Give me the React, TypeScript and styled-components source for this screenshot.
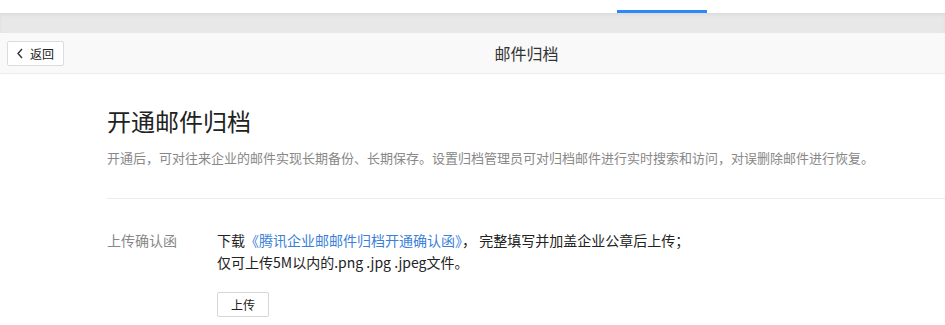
import React from "react";
import styled, { createGlobalStyle } from "styled-components";

const Global = createGlobalStyle`
  html, body { margin: 0; padding: 0; background: #fff; }
  body { font-family: "Microsoft YaHei", "Noto Sans CJK SC", "Liberation Sans", sans-serif; color: #333; }
  * { box-sizing: border-box; }
`;

const Page = styled.div`
  width: 945px;
  height: 325px;
  overflow: hidden;
  background: #fff;
`;

const TabStrip = styled.div`
  height: 13px;
  background: #fff;
  display: flex;
  align-items: flex-end;
  padding-left: 617px;
`;

const TabIndicator = styled.div`
  width: 90px;
  height: 3px;
  background: #2d88f5;
`;

const Gutter = styled.div`
  height: 20px;
  background: #e8e8e8;
  box-shadow: inset 0 2px 3px rgba(0, 0, 0, 0.06);
`;

const Header = styled.div`
  height: 41px;
  background: #f9f9f9;
  border-bottom: 1px solid #ececec;
  display: grid;
  grid-template-columns: 1fr auto 1fr;
  align-items: center;
  padding: 0 7px;
`;

const BackButton = styled.button`
  justify-self: start;
  width: 57px;
  height: 25px;
  background: #fff;
  border: 1px solid #dcdcdc;
  border-radius: 2px;
  display: flex;
  align-items: center;
  gap: 6px;
  padding: 0 0 0 8px;
  font-family: inherit;
  font-size: 12px;
  color: #222;
  cursor: pointer;
`;

const Title = styled.div`
  font-size: 16px;
  color: #333;
  padding-left: 108px;
`;

const Content = styled.div`
  padding: 31px 0 0 107px;
`;

const Heading = styled.h1`
  margin: 0;
  font-size: 24px;
  line-height: 32px;
  font-weight: normal;
  color: #222;
`;

const Desc = styled.p`
  margin: 11px 0 0;
  font-size: 13px;
  line-height: 20px;
  color: #888;
`;

const Divider = styled.div`
  margin-top: 30px;
  height: 1px;
  background: #ededed;
`;

const Row = styled.div`
  display: grid;
  grid-template-columns: 110px 1fr;
  padding-top: 30px;
`;

const Label = styled.div`
  font-size: 14px;
  line-height: 22px;
  color: #888;
`;

const Body = styled.div`
  font-size: 14px;
  line-height: 22px;
  color: #222;
`;

const Link = styled.a`
  color: #3b7fd9;
  text-decoration: none;
`;

const UploadButton = styled.button`
  margin-top: 19px;
  width: 52px;
  height: 25px;
  background: #fff;
  border: 1px solid #d6d6d6;
  border-radius: 2px;
  font-family: inherit;
  font-size: 12px;
  color: #222;
  padding: 0;
  display: block;
  cursor: pointer;
`;

export default function App() {
  return (
    <Page>
      <Global />
      <TabStrip>
        <TabIndicator />
      </TabStrip>
      <Gutter />
      <Header>
        <BackButton>
          <svg width="8" height="11" viewBox="0 0 8 11">
            <path d="M6 1 L2 5.5 L6 10" fill="none" stroke="#333" strokeWidth="1.4" />
          </svg>
          返回
        </BackButton>
        <Title>邮件归档</Title>
        <span />
      </Header>
      <Content>
        <Heading>开通邮件归档</Heading>
        <Desc>
          开通后，可对往来企业的邮件实现长期备份、长期保存。设置归档管理员可对归档邮件进行实时搜索和访问，对误删除邮件进行恢复。
        </Desc>
        <Divider />
        <Row>
          <Label>上传确认函</Label>
          <Body>
            <div>
              下载<Link href="#">《腾讯企业邮邮件归档开通确认函》</Link>， 完整填写并加盖企业公章后上传；
            </div>
            <div>仅可上传5M以内的.png .jpg .jpeg文件。</div>
            <UploadButton>上传</UploadButton>
          </Body>
        </Row>
      </Content>
    </Page>
  );
}
